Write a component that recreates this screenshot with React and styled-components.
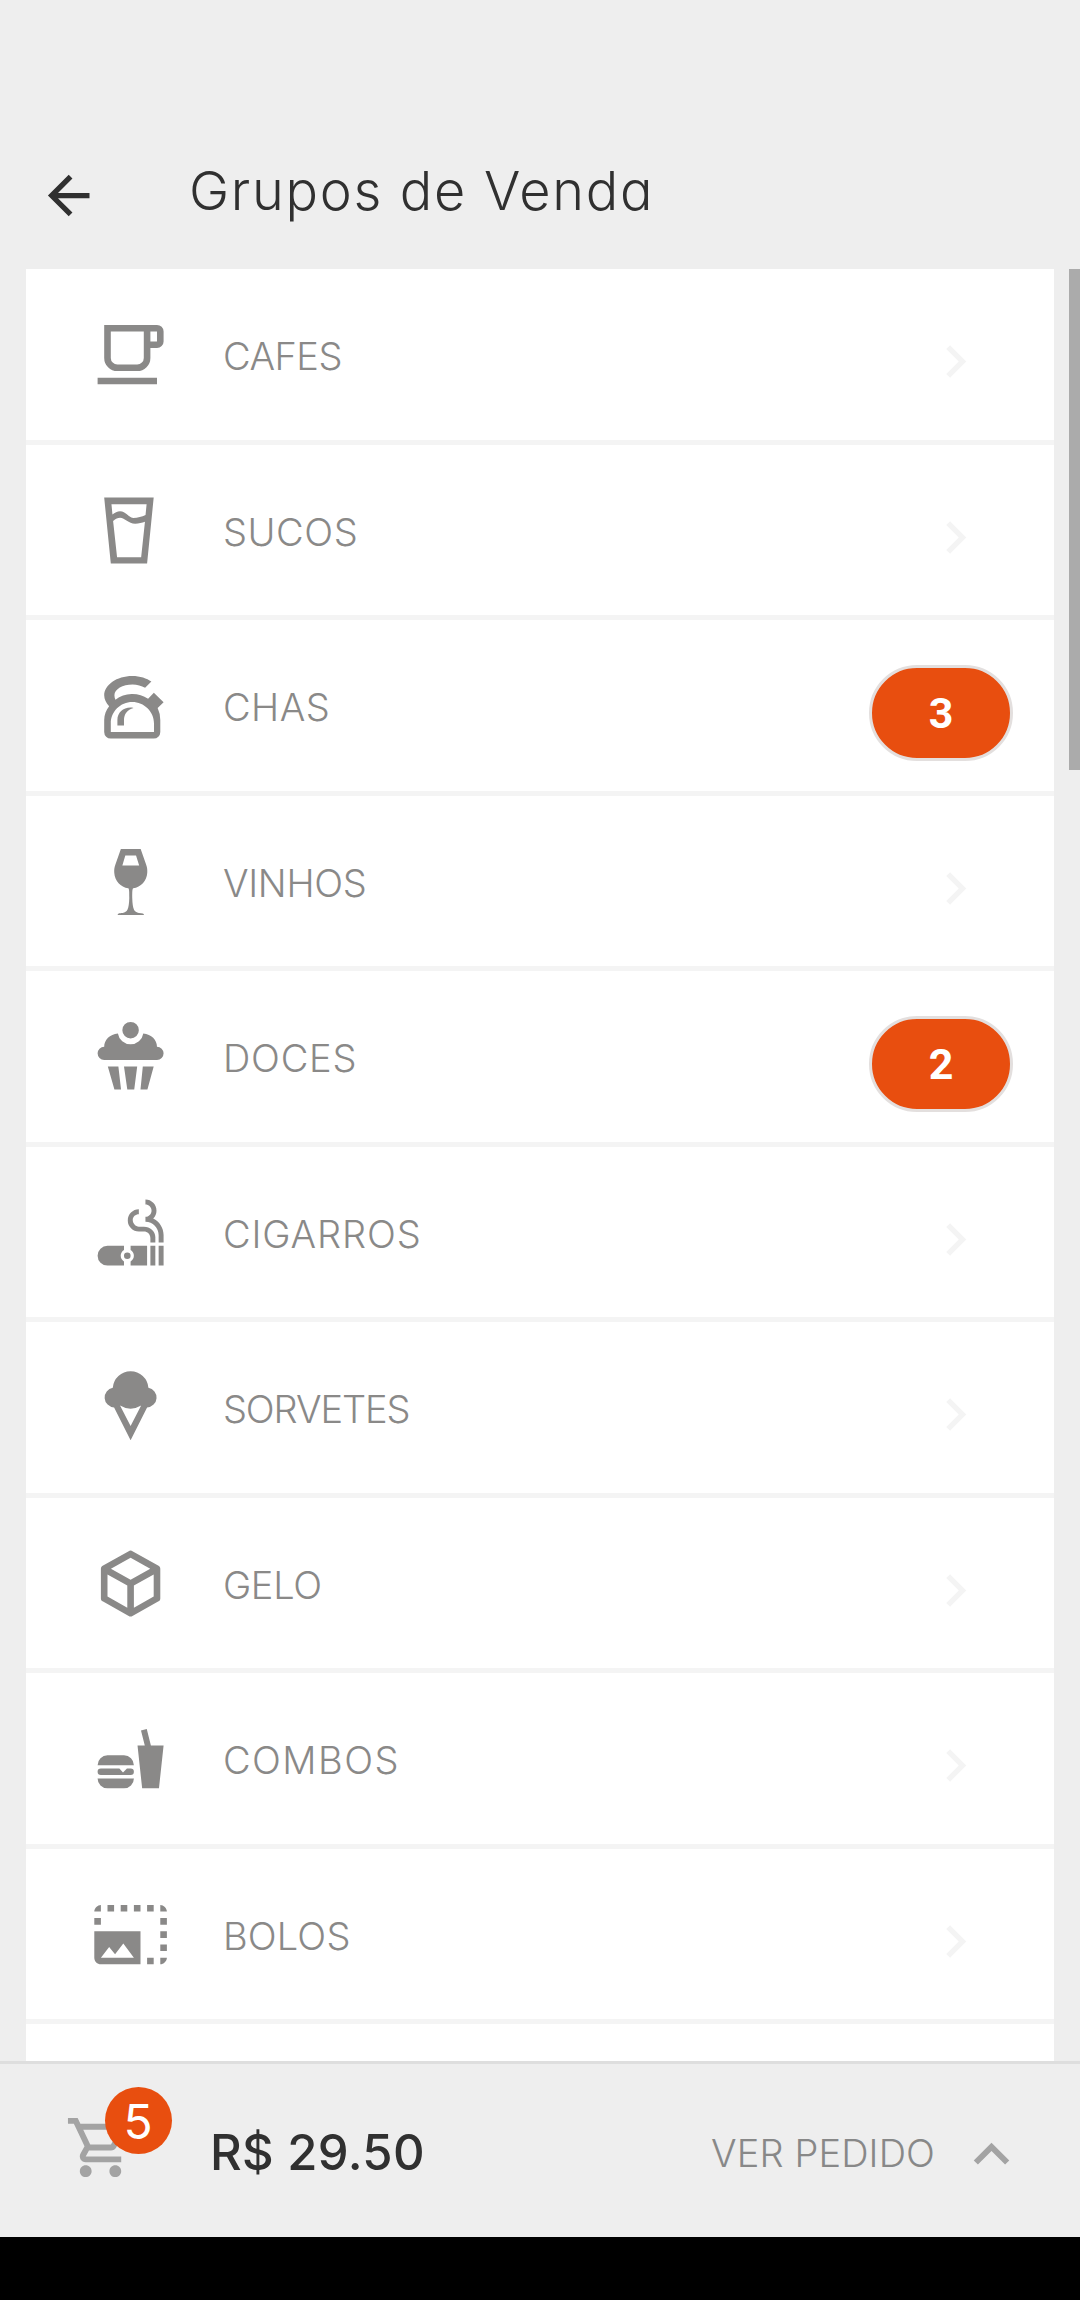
import React from "react";
import styled, { createGlobalStyle } from "styled-components";

const Global = createGlobalStyle`
  * { box-sizing: border-box; }
  body {
    margin: 0;
    background: #eee;
    font-family: Inter, "Liberation Sans", sans-serif;
    font-feature-settings: "cv11";
  }
`;

const Screen = styled.div`
  width: 1080px;
  height: 2300px;
  display: flex;
  flex-direction: column;
  overflow: hidden;
  background: #eee;
`;

const Header = styled.header`
  flex: none;
  height: 269px;
  padding: 122px 37px 0;
  display: flex;
  align-items: center;
  color: #303030;
`;

const BackButton = styled.button`
  display: flex;
  margin: 0 89px 0 0;
  padding: 0;
  border: 0;
  background: none;
  color: inherit;
`;

const Title = styled.h1`
  margin: 0 0 9px;
  font-size: 54px;
  font-weight: 300;
  line-height: 64px;
  letter-spacing: 1.7px;
  white-space: nowrap;
`;

const Content = styled.main`
  flex: 1;
  min-height: 0;
  display: flex;
  justify-content: space-between;
  padding-left: 26px;
  overflow: hidden;
`;

const List = styled.ul`
  width: 1028px;
  height: 1792px;
  margin: 0;
  padding: 0.2px 0 0;
  list-style: none;
  background: #fff;
  overflow: hidden;
`;

const ScrollThumb = styled.div`
  width: 11px;
  height: 501px;
  background: #ababab;
`;

const Row = styled.li`
  height: 175.5px;
  padding: 0.7px 0 0 64.7px;
  display: flex;
  align-items: center;
  border-bottom: 5px solid #f4f4f4;
  color: #8a8988;
`;

const Icon = styled.svg`
  flex: none;
  display: block;
  width: ${(p) => p.$size}px;
  height: ${(p) => p.$size}px;
  fill: currentColor;
  fill-rule: evenodd;
`;

const Label = styled.span`
  flex: 1;
  padding: 3px 0 0 53px;
  font-size: 38px;
  font-weight: 300;
  line-height: 46px;
  letter-spacing: ${(p) => p.$tracking}px;
`;

const Go = styled.span`
  display: flex;
  margin: 14px 66px 0 0;
  color: #f4f4f4;
`;

const Count = styled.span`
  width: 144px;
  height: 96px;
  margin: 14.5px 41px 0 0;
  display: flex;
  align-items: center;
  justify-content: center;
  border: 3px solid #e3dfde;
  border-radius: 48px;
  background: #e84e0f;
  color: #fff;
  font-family: Roboto, sans-serif;
  font-size: 43px;
  font-weight: 700;
`;

const Footer = styled.footer`
  flex: none;
  height: 176px;
  padding: 0 53px 0 65px;
  display: flex;
  align-items: center;
  border-top: 3px solid #dedede;
  background: #eee;
`;

const Cart = styled.div`
  position: relative;
  margin-bottom: 6px;
  color: #a3a3a3;
`;

const CartBadge = styled.span`
  position: absolute;
  left: 40px;
  top: -25px;
  width: 67px;
  height: 67px;
  padding: 2px 1px 0 0;
  display: flex;
  align-items: center;
  justify-content: center;
  border-radius: 50%;
  background: #e84e0f;
  color: #fff;
  font-size: 48px;
`;

const Total = styled.strong`
  flex: 1;
  margin-left: 74px;
  padding-top: 5px;
  font-size: 49px;
  font-weight: 500;
  line-height: 60px;
  letter-spacing: 0.3px;
  color: #303030;
`;

const OrderButton = styled.button`
  display: flex;
  align-items: center;
  gap: 21px;
  margin: 0;
  padding: 0;
  border: 0;
  background: none;
  color: #888;
  font: 350 38px/46px Inter, sans-serif;
  letter-spacing: 0.1px;
`;

const OrderLabel = styled.span`
  padding-top: 4px;
`;

const OrderArrow = styled.span`
  display: flex;
  padding-top: 7px;
  color: #a3a3a3;
`;

const NavBar = styled.div`
  flex: none;
  height: 63px;
  background: #000;
`;

const paths = {
  back: "M20 11v2H8l5.5 5.5-1.42 1.42L4.16 12l7.92-7.92L13.5 5.5 8 11h12z",
  right: "M8.59 16.58 13.17 12 8.59 7.41 10 6l6 6-6 6-1.41-1.42z",
  up: "M7.41 15.41 12 10.83l4.59 4.58L18 14l-6-6-6 6z",
  cart: "M15.55 13c.75 0 1.41-.41 1.75-1.03l3.58-6.49A.996.996 0 0 0 20.01 4H5.21l-.94-2H1v2h2l3.6 7.59-1.35 2.44C4.52 15.37 5.48 17 7 17h12v-2H7l1.1-2h7.45zM6.16 6h12.15l-2.76 5H8.53L6.16 6zM7 18c-1.1 0-1.99.9-1.99 2S5.9 22 7 22s2-.9 2-2-.9-2-2-2zm10 0c-1.1 0-1.99.9-1.99 2s.89 2 1.99 2 2-.9 2-2-.9-2-2-2z",
  coffee: "M2 21V19H20V21H2M20 8V5H18V8H20M20 3A2 2 0 0 1 22 5V8A2 2 0 0 1 20 10H18V13A4 4 0 0 1 14 17H8A4 4 0 0 1 4 13V3H20M16 5H6V13A2 2 0 0 0 8 15H14A2 2 0 0 0 16 13V5Z",
  glass: "M4 2 6 22H17L19 2H4M6.2 4H16.85L16.53 7.25C15.4 7.75 14.2 8.15 12.8 8.15 11.2 7.9 10.6 6.1 8.8 6.1 8 6.1 7.2 6.5 6.5 7.1L6.2 4M6.7 9.1C7.5 8.4 8.1 8.1 8.8 8.1 10.3 8.1 11.3 9.9 13.4 9.9 14.5 9.9 15.5 9.6 16.35 9.3L15.2 20.1H7.9L6.7 9.1Z",
  kettle: "M12.5 3C14.9 3 16.9 3.7 18.3 4.7L16.4 6.6C15.3 6 14 5.6 12.6 5.6 9.6 5.6 7.1 7 7.1 8.9 7.1 9.4 7.2 9.8 7.4 10.2A8.5 8.5 0 0 1 17.3 9.9L19.05 8.1 22 11 20.2 12.7A8.5 8.5 0 0 1 21 16.4V20A2 2 0 0 1 19 22H6A2 2 0 0 1 4 20V16.4C4 14.7 4.6 13.4 5.5 12.2 4.6 11.3 4 10.1 4 8.9 4 5.7 7.8 3 12.5 3M12.5 10.9C8.9 10.9 6 13.8 6 17.4V20H19.1V17.4C19.1 13.8 16.1 10.9 12.5 10.9M8 18V16.4C8 13.9 10.2 12.2 12.9 12.7 11 13.3 10 14.5 10 16.4V18H8Z",
  wine: "M9.05 2.1H15.05L16.7 6.8C17.05 7.8 17.1 8.5 17.05 9.3 16.9 11.8 15.1 13.7 12.8 14 12.5 14.2 12.5 15 12.5 17 12.6 20.5 13.1 21.3 14.5 21.5 15.6 21.55 16.05 21.6 16.05 22.1H8.1C8.1 21.6 8.5 21.55 9.6 21.5 11 21.3 11.5 20.5 11.6 17 11.6 15 11.6 14.2 11.3 14 9 13.7 7.2 11.8 7.05 9.3 7 8.5 7.05 7.8 7.4 6.8L9.05 2.1M10.4 4.1 9.5 7.15H14.6L13.65 4.1H10.4Z",
  cupcake: "M12 1.5A2.5 2.5 0 1 1 12 6.5 2.5 2.5 0 1 1 12 1.5M4 13A2 2 0 0 1 4 9C4 7 5.7 5.2 8.15 5A3.9 3.9 0 0 0 15.85 5C18.3 5.2 20 7 20 9A2 2 0 0 1 20 13H4M5.1 15H8.3L9.1 22H7.1L5.1 15M10 15H14L13.1 22H11L10 15M15.7 15H19L17.1 22H15L15.7 15Z",
  cigar: "M5 16H10V17.27A2 2 0 0 0 10 20.73V22H5A3 3 0 0 1 5 16M12 16H17V22H12V20.73A2 2 0 0 0 12 17.27V16M11 18A1 1 0 1 1 11 20 1 1 0 1 1 11 18M18 16H19.5V22H18V16M20.5 16H22V22H20.5V16M18.85 7.73C19.47 7.12 19.85 6.28 19.85 5.35C19.85 3.5 18.35 2 16.5 2V3.5C17.5 3.5 18.35 4.33 18.35 5.35C18.35 6.37 17.5 7.2 16.5 7.2V8.7C18.74 8.7 20.5 10.53 20.5 12.77V15H22V12.76C22 10.54 20.72 8.62 18.85 7.73M16.03 10.2H14.5C13.5 10.2 12.65 9.22 12.65 8.2C12.65 7.18 13.5 6.45 14.5 6.45V4.95C12.65 4.95 11.15 6.45 11.15 8.3A3.35 3.35 0 0 0 14.5 11.65H16.03C17.08 11.65 18 12.39 18 13.7V15H19.5V13.36C19.5 11.55 17.9 10.2 16.03 10.2Z",
  icecream: "M12 1A5.4 5.4 0 0 1 17.4 6A3 3 0 0 1 17 11.95L12 21.9 7 11.95A3 3 0 0 1 6.6 6A5.4 5.4 0 0 1 12 1M8.8 11.4 12 17.6 15.2 11.4A6 6 0 0 1 8.8 11.4Z",
  cube: "M21 16.5C21 16.88 20.79 17.21 20.47 17.38L12.57 21.82C12.41 21.94 12.21 22 12 22C11.79 22 11.59 21.94 11.43 21.82L3.53 17.38C3.21 17.21 3 16.88 3 16.5V7.5C3 7.12 3.21 6.79 3.53 6.62L11.43 2.18C11.59 2.06 11.79 2 12 2C12.21 2 12.41 2.06 12.57 2.18L20.47 6.62C20.79 6.79 21 7.12 21 7.5V16.5M12 4.15L6.04 7.5L12 10.85L17.96 7.5L12 4.15M5 15.91L11 19.29V12.58L5 9.21V15.91M19 15.91V9.21L13 12.58V19.29L19 15.91Z",
  food: "M5 11H10A3 3 0 0 1 13 14H2A3 3 0 0 1 5 11M3 15H8.6L9.7 16.2 10.9 15H12A1 1 0 0 1 12 17H3A1 1 0 0 1 3 15M2 18H13A3 3 0 0 1 10 21H5A3 3 0 0 1 2 18M14.1 8H16.3L15.15 3.5 16.9 3.05 18.15 8H22L20.6 21H15.5L14.1 8Z",
  photo: "M21 15h2v2h-2v-2zm0-4h2v2h-2v-2zm2 8h-2v2c1 0 2-1 2-2zM13 3h2v2h-2V3zm8 4h2v2h-2V7zm0-4v2h2c0-1-1-2-2-2zM1 7h2v2H1V7zm16-4h2v2h-2V3zm0 16h2v2h-2v-2zM3 3C2 3 1 4 1 5h2V3zm6 0h2v2H9V3zM5 3h2v2H5V3zm-4 8v8c0 1.1.9 2 2 2h12V11H1zm2 8l2.5-3.21 1.79 2.15 2.5-3.22L13 19H3z",
};

const groups = [
  { name: "CAFES", icon: "coffee", tracking: -0.5 },
  { name: "SUCOS", icon: "glass", tracking: 0.6 },
  { name: "CHAS", icon: "kettle", tracking: 0.5, count: 3 },
  { name: "VINHOS", icon: "wine", tracking: -0.3 },
  { name: "DOCES", icon: "cupcake", tracking: 0.8, count: 2 },
  { name: "CIGARROS", icon: "cigar", tracking: 0.9 },
  { name: "SORVETES", icon: "icecream", tracking: -1.1 },
  { name: "GELO", icon: "cube", tracking: -0.3 },
  { name: "COMBOS", icon: "food", tracking: 1.5 },
  { name: "BOLOS", icon: "photo", tracking: 0.2 },
];

const Glyph = ({ name, size }) => (
  <Icon viewBox="0 0 24 24" $size={size} aria-hidden="true">
    <path d={paths[name]} />
  </Icon>
);

export default function App() {
  return (
    <Screen>
      <Global />
      <Header>
        <BackButton aria-label="Voltar">
          <Glyph name="back" size={63} />
        </BackButton>
        <Title>Grupos de Venda</Title>
      </Header>
      <Content>
        <List>
          {groups.map((g) => (
            <Row key={g.name}>
              <Glyph name={g.icon} size={79.2} />
              <Label $tracking={g.tracking}>{g.name}</Label>
              {g.count ? (
                <Count>{g.count}</Count>
              ) : (
                <Go>
                  <Glyph name="right" size={65} />
                </Go>
              )}
            </Row>
          ))}
        </List>
        <ScrollThumb />
      </Content>
      <Footer>
        <Cart>
          <Glyph name="cart" size={71} />
          <CartBadge>5</CartBadge>
        </Cart>
        <Total>R$ 29.50</Total>
        <OrderButton>
          <OrderLabel>VER PEDIDO</OrderLabel>
          <OrderArrow>
            <Glyph name="up" size={71} />
          </OrderArrow>
        </OrderButton>
      </Footer>
      <NavBar />
    </Screen>
  );
}
